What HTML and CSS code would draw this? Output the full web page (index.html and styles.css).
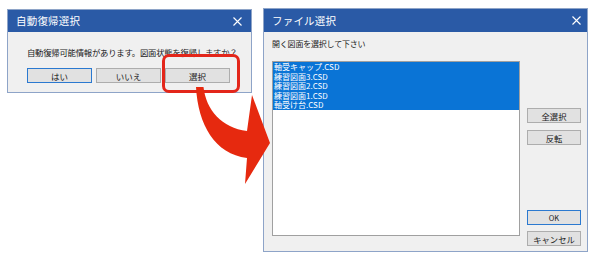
FILE: index.html
```html
<!DOCTYPE html>
<html lang="ja">
<head>
<meta charset="utf-8">
<link rel="stylesheet" href="styles.css">
</head>
<body>
<div class="desk">
  <div class="dlg dlg-restore">
    <div class="title">
      <span class="title-text">自動復帰選択</span>
      <svg class="close" width="9" height="9" viewBox="0 0 9 9"><path d="M0.5 0.5L8.5 8.5M8.5 0.5L0.5 8.5" stroke="#fff" stroke-width="1.1"/></svg>
    </div>
    <div class="body-restore">
      <div class="msg">自動復帰可能情報があります。図面状態を復帰しますか？</div>
      <div class="btn-row">
        <div class="btn btn-default">はい</div>
        <div class="btn">いいえ</div>
        <div class="btn">選択</div>
      </div>
    </div>
  </div>

  <div class="dlg dlg-file">
    <div class="title">
      <span class="title-text">ファイル選択</span>
      <svg class="close" width="9" height="9" viewBox="0 0 9 9"><path d="M0.5 0.5L8.5 8.5M8.5 0.5L0.5 8.5" stroke="#fff" stroke-width="1.1"/></svg>
    </div>
    <div class="body-file">
      <div class="label">開く図面を選択して下さい</div>
      <div class="file-row">
        <div class="list">
          <div class="item">軸受キャップ.CSD</div>
          <div class="item">練習図面3.CSD</div>
          <div class="item">練習図面2.CSD</div>
          <div class="item">練習図面1.CSD</div>
          <div class="item">軸受け台.CSD</div>
        </div>
        <div class="side">
          <div class="btn btn-side">全選択</div>
          <div class="btn btn-side">反転</div>
          <div class="btn btn-side btn-default btn-ok">OK</div>
          <div class="btn btn-side">キャンセル</div>
        </div>
      </div>
    </div>
  </div>

  <div class="highlight"></div>
  <svg class="arrow" width="600" height="263" viewBox="0 0 600 263">
    <path d="M196,87 L203.5,87 C206,110 222,128 247,131 L252,95 L270,143 L245,184 L247,158 C215,154 198,125 196,87 Z" fill="#e6290f"/>
  </svg>
</div>
</body>
</html>
```
FILE: styles.css
```css
html, body {
  margin: 0;
  padding: 0;
  background: #ffffff;
}
body {
  font-family: "Noto Sans CJK JP", "Noto Sans", sans-serif;
  color: #1a1a1a;
}
.desk {
  position: relative;
  width: 600px;
  height: 263px;
  overflow: hidden;
}
.dlg {
  position: absolute;
  box-sizing: border-box;
  border: 1px solid #8ea4c8;
  background: #f0f0f0;
  display: flex;
  flex-direction: column;
}
.dlg-restore {
  left: 7px;
  top: 9px;
  width: 245px;
  height: 84px;
}
.dlg-file {
  left: 263px;
  top: 8px;
  width: 325px;
  height: 244px;
}
.title {
  background: #2a5aa6;
  color: #ffffff;
  display: flex;
  align-items: center;
  justify-content: space-between;
  padding: 0 9px 0 8px;
  flex: none;
}
.dlg-restore .title { height: 22px; }
.dlg-file .title { height: 23px; padding-right: 6px; }
.title-text {
  font-size: 10.5px;
  line-height: 14px;
  letter-spacing: 0.2px;
}
.close { display: block; }

.body-restore {
  padding: 14px 0 0 19px;
  display: flex;
  flex-direction: column;
}
.msg {
  font-size: 8.4px;
  line-height: 12px;
  white-space: nowrap;
  letter-spacing: -0.25px;
}
.btn-row {
  display: flex;
  gap: 4px;
  margin-top: 10px;
}
.btn {
  box-sizing: border-box;
  background: #e1e1e1;
  border: 1px solid #adadad;
  height: 15px;
  width: 65px;
  display: flex;
  align-items: center;
  justify-content: center;
  font-size: 8.5px;
  line-height: 10px;
  color: #1a1a1a;
}
.btn-default {
  border: 1.5px solid #2b79d0;
}

.body-file {
  padding: 5px 6px 0 8px;
  display: flex;
  flex-direction: column;
}
.label {
  font-size: 8px;
  line-height: 13px;
  white-space: nowrap;
  letter-spacing: -0.2px;
}
.file-row {
  display: flex;
  align-items: flex-start;
  gap: 7px;
  margin-top: 11px;
}
.list {
  box-sizing: border-box;
  width: 248px;
  height: 175px;
  background: #ffffff;
  border: 1px solid #a0a0a0;
  display: flex;
  flex-direction: column;
}
.item {
  background: #0a74d6;
  color: #ffffff;
  font-size: 8px;
  line-height: 9.6px;
  height: 9.6px;
  padding-left: 1px;
  white-space: nowrap;
  overflow: hidden;
}
.side {
  width: 54px;
  height: 185px;
  box-sizing: border-box;
  padding-top: 47px;
  display: flex;
  flex-direction: column;
  gap: 7px;
}
.btn-side {
  width: 54px;
  font-size: 8.3px;
}
.btn-ok {
  margin-top: auto;
  margin-bottom: -1px;
  font-size: 7.5px;
}

.highlight {
  position: absolute;
  box-sizing: border-box;
  left: 162px;
  top: 54px;
  width: 78px;
  height: 39px;
  border: 3px solid #e3261a;
  border-radius: 7px;
}
.arrow {
  position: absolute;
  left: 0;
  top: 0;
  pointer-events: none;
}
```
